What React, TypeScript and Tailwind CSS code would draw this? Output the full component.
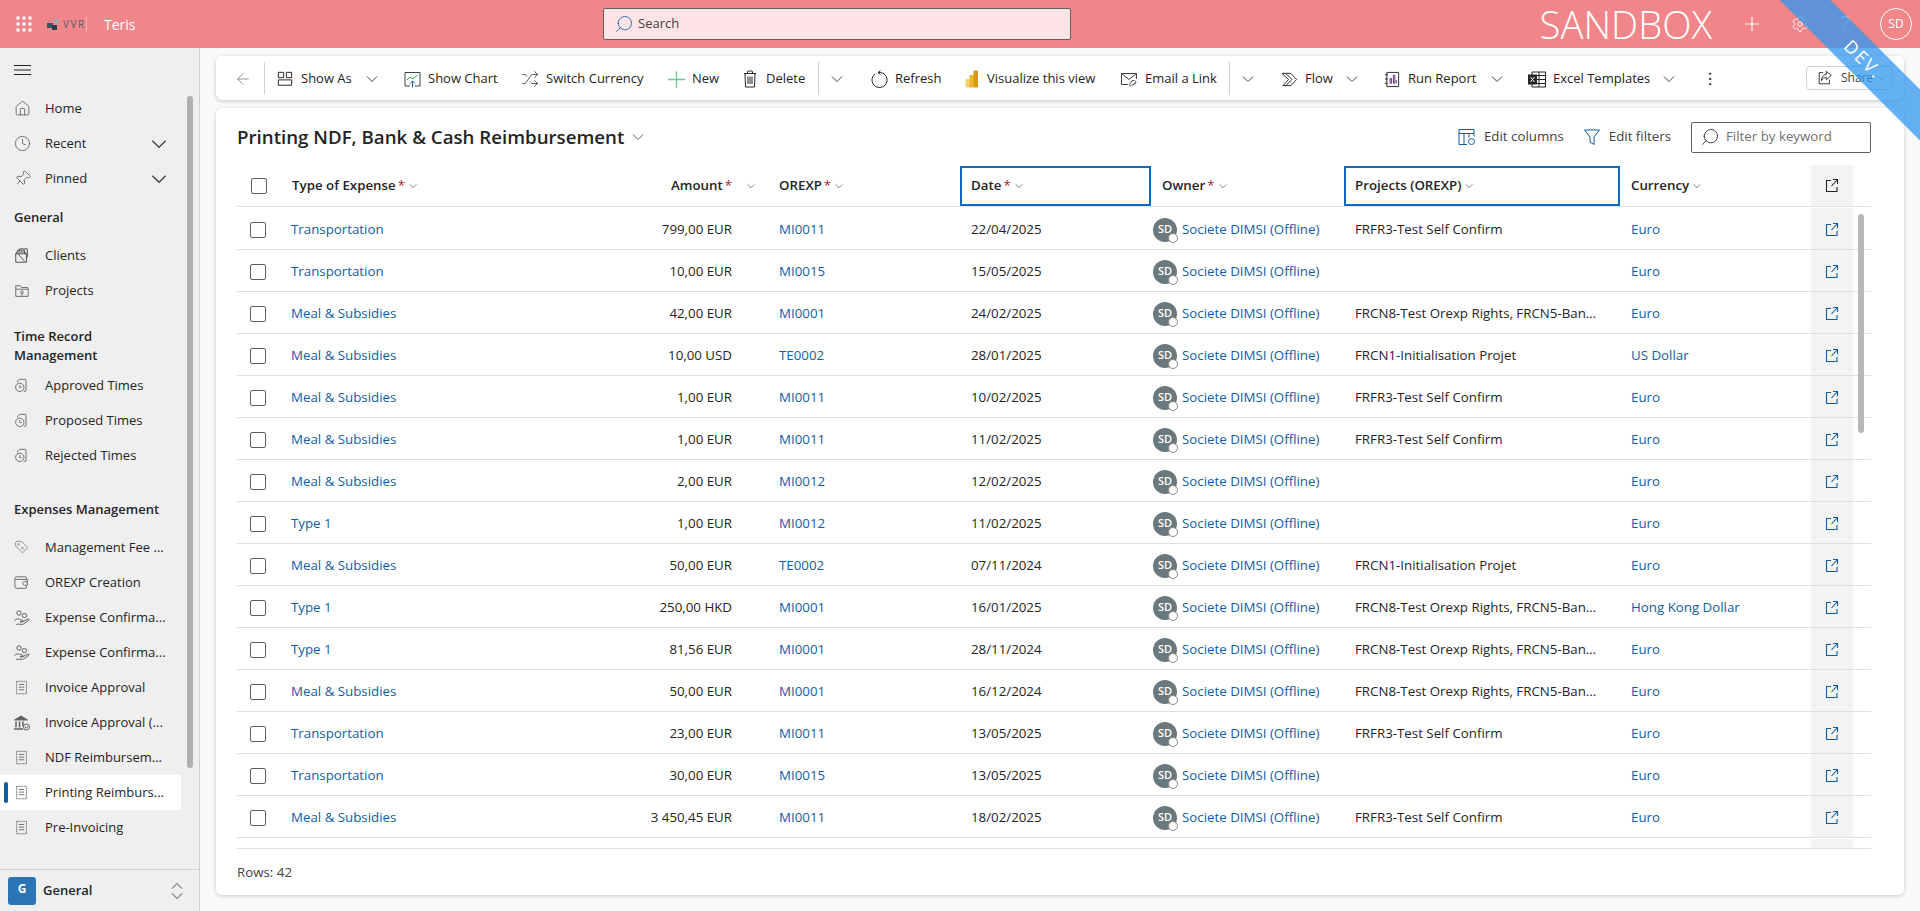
import React from "react";
import { ArrowLeft, Clock, EllipsisVertical, House, Pin, Plus, Search, Settings, Shuffle } from "lucide-react";

const Svg = ({ size = 18, children, className = "" }: { size?: number; children: React.ReactNode; className?: string }) => (
    <svg width={size} height={size} viewBox="0 0 18 18" fill="none" stroke="currentColor" strokeWidth="1" className={className}>
        {children}
    </svg>
);

const Chev = ({ size = 12, className = "text-[#424242]" }: { size?: number; className?: string }) => (
    <svg width={size} height={size} viewBox="0 0 12 12" fill="none" stroke="currentColor" strokeWidth="1" className={className}>
        <path d="M1 3.5 6 8.5 11 3.5" />
    </svg>
);

const OpenIcon = () => (
    <svg width="14" height="15" viewBox="0 0 14 15" fill="none" stroke="#115ea3" strokeWidth="1.1">
        <path d="M6 2.500H1.500v11h10.500V9" />
        <path d="M8 1.500h4.500V6M12.500 1.500l-6 6.500" />
    </svg>
);

const TimeDoc = () => (
    <Svg size={16} className="text-[#616161]">
        <path d="M4 5V3.500L6 1.500h6.500a1 1 0 0 1 1 1v11.500a1 1 0 0 1-1 1H11" />
        <circle cx="6.500" cy="10.500" r="4.700" />
        <path d="M6.500 8v2.800h2" />
    </Svg>
);

const Receipt = () => (
    <Svg size={16} className="text-[#616161]">
        <path strokeDasharray="1.5 .6" d="M3 1.500h11v14H3z" />
        <path d="M5.500 5h6M5.500 8h6M5.500 11h6" />
    </Svg>
);

const HandCoins = () => (
    <Svg size={18} className="text-[#616161]">
        <circle cx="6" cy="4" r="2.200" />
        <circle cx="11.500" cy="6.500" r="2.200" />
        <path d="M1.500 11.500c2-2 3.500-2 5-1l2.500 .5c1.500 .2 1.500 1.700 0 1.800l-2 .1 3-.3 5-2.600c1-.4 1.600 .6 .7 1.300l-5.200 3.700c-1 .5-3 .6-5.300 0l-2 .5" />
    </Svg>
);

const navTop = [
    { label: "Home", icon: <House size={17} strokeWidth={1} /> },
    { label: "Recent", icon: <Clock size={17} strokeWidth={1} />, chev: true },
    { label: "Pinned", icon: <Pin size={17} strokeWidth={1} className="rotate-45" />, chev: true },
];

const NavItem = ({ label, icon, chev, active }: { label: string; icon: React.ReactNode; chev?: boolean; active?: boolean }) => (
    <div className={`relative flex h-[35px] w-[181px] items-center ${active ? "bg-white" : ""}`}>
        {active && <div className="absolute left-[4px] top-[7px] h-[21px] w-[4px] rounded-sm bg-[#115ea3]" />}
        <div className="flex w-[45px] justify-center pr-[1px] text-[#424242]">{icon}</div>
        <span className="truncate pt-[1px]">{label}</span>
        {chev && (
            <div className="ml-auto mr-[14px]">
                <Chev size={16} />
            </div>
        )}
    </div>
);

const Sidebar = () => (
    <aside className="relative flex w-[200px] shrink-0 flex-col border-r border-[#d1d1d1] bg-[#efefef] text-[13px] text-[#242424]">
        <div className="flex h-[43px] items-center pl-[14px]">
            <svg width="17" height="10" viewBox="0 0 17 10" stroke="#242424" strokeWidth="1">
                <path d="M0 .5h17M0 5h17M0 9.500h17" />
            </svg>
        </div>
        {navTop.map((n) => (
            <NavItem key={n.label} {...n} />
        ))}
        <div className="flex h-[42px] items-center pl-[14px] pt-[2px] font-semibold">General</div>
        <NavItem
            label="Clients"
            icon={
                <Svg size={16} className="text-[#424242]">
                    <path d="M2 6.500h12v9.500H2zM2 6.500l1-2h8l3 2M4 4.500v-2h8v4M6 2.500v-1.500h9v9l-1 1M4.500 6.500 12 15" />
                </Svg>
            }
        />
        <NavItem
            label="Projects"
            icon={
                <Svg size={16} className="text-[#616161]">
                    <path d="M2 15V3h5l1.500 2H15a1 1 0 0 1 1 1v9zM2 7h14" />
                    <circle cx="9" cy="10.500" r="1.500" />
                    <path d="M9 12v3" />
                </Svg>
            }
        />
        <div className="pb-[3px] pl-[14px] pt-[19px] font-semibold leading-[19px]">
            Time Record
            <br />
            Management
        </div>
        <NavItem label="Approved Times" icon={<TimeDoc />} />
        <NavItem label="Proposed Times" icon={<TimeDoc />} />
        <NavItem label="Rejected Times" icon={<TimeDoc />} />
        <div className="pb-[11px] pl-[14px] pt-[27px] font-semibold leading-[19px]">Expenses Management</div>
        <NavItem
            label="Management Fee ..."
            icon={
                <Svg size={16} className="text-[#8a8a8a]">
                    <path d="M1.500 3.500 3 1.500h5.500l7 7-6 6-7.500-7.500z" />
                    <circle cx="5" cy="5" r="1" />
                    <path d="M8 7.500l3 3M11 7.500l-3 3" />
                </Svg>
            }
        />
        <NavItem
            label="OREXP Creation"
            icon={
                <Svg size={16} className="text-[#616161]">
                    <path d="M14 5V3a1 1 0 0 0-1-1H3a2 2 0 0 0-2 2v9a2 2 0 0 0 2 2h10a1 1 0 0 0 1-1v-2" />
                    <path d="M1.500 5H15v6.500h-3a2 2 0 0 1 0-4h3" />
                </Svg>
            }
        />
        <NavItem label="Expense Confirma..." icon={<HandCoins />} />
        <NavItem label="Expense Confirma..." icon={<HandCoins />} />
        <NavItem label="Invoice Approval" icon={<Receipt />} />
        <NavItem
            label="Invoice Approval (..."
            icon={
                <Svg size={18} className="text-[#616161]">
                    <path d="M1.500 6 8 2l6.500 4z" fill="currentColor" />
                    <path d="M3 7.500v6M6.500 7.500v6M10 7.500v5M1 15h9" strokeWidth="1.500" />
                    <circle cx="13.500" cy="13" r="3" fill="#efefef" />
                    <path d="m12 13 1.200 1.200 2-2.200" />
                </Svg>
            }
        />
        <NavItem label="NDF Reimbursem..." icon={<Receipt />} />
        <NavItem label="Printing Reimburs..." icon={<Receipt />} active />
        <NavItem label="Pre-Invoicing" icon={<Receipt />} />
        <div className="flex-1" />
        <div className="flex h-[42px] items-center border-t border-[#d1d1d1] pl-[8px]">
            <div className="flex h-[28px] w-[28px] items-center justify-center rounded-[3px] bg-[#2a75b5] pb-[4px] text-[12px] font-bold text-white">G</div>
            <span className="ml-[7px] font-semibold">General</span>
            <svg width="12" height="18" viewBox="0 0 12 18" fill="none" stroke="#424242" strokeWidth="1" className="ml-auto mr-[16px]">
                <path d="M1 6.500 6 1.500l5 5M1 11.500l5 5 5-5" />
            </svg>
        </div>
        <div className="absolute left-[187px] top-[48px] h-[672px] w-[6px] rounded-[3px] bg-[#b0b0b0]" />
    </aside>
);

const Tool = ({ w, icon, label, chev }: { w: string; icon: React.ReactNode; label: string; chev?: boolean }) => (
    <div className={`flex shrink-0 items-center ${w}`}>
        <div className="flex w-[24px] justify-center">{icon}</div>
        <span className="ml-[4px] whitespace-nowrap">{label}</span>
        {chev && (
            <div className="ml-auto mr-[22px]">
                <Chev />
            </div>
        )}
    </div>
);

const Sep = () => <div className="-mt-[2px] h-[32px] w-px shrink-0 bg-[#d1d1d1]" />;

const Toolbar = () => (
    <div className="flex h-[44px] shrink-0 items-center rounded-md bg-white pt-[2px] text-[13px] text-[#242424] shadow-[0_1px_4px_rgba(0,0,0,0.22)]">
        <div className="flex w-[48px] justify-center pl-[6px] text-[#707070]">
            <ArrowLeft size={18} strokeWidth={1} />
        </div>
        <Sep />
        <div className="w-[8px]" />
        <Tool
            w="w-[127px]"
            label="Show As"
            chev
            icon={
                <Svg size={16} className="text-[#111]">
                    <path d="M1.500 1.500h6v6h-6zM10.500 1.500h6v6h-6zM1.500 10h15v6h-15z" />
                </Svg>
            }
        />
        <Tool
            w="w-[118px]"
            label="Show Chart"
            icon={
                <svg width="17" height="17" viewBox="0 0 17 17" fill="none" strokeWidth="1">
                    <path d="M6 15H1V1.500h15V15h-5" stroke="#424242" />
                    <path d="m3 9 3-3 3 2 4.500-4" stroke="#2fa84f" />
                    <path d="M8.500 16.500V10M6 12.500 8.500 10l2.500 2.500" stroke="#115ea3" />
                </svg>
            }
        />
        <Tool w="w-[146px]" label="Switch Currency" icon={<Shuffle size={18} strokeWidth={1} />} />
        <Tool
            w="w-[74px]"
            label="New"
            icon={
                <svg width="17" height="17" viewBox="0 0 17 17" stroke="#73c796" strokeWidth="1.300">
                    <path d="M8.500 0v17M0 8.500h17" />
                </svg>
            }
        />
        <Tool
            w="w-[80px]"
            label="Delete"
            icon={
                <Svg size={18} className="text-[#242424]">
                    <path d="M3 3.500h12M6.500 3.500V2a1 1 0 0 1 1-1h3a1 1 0 0 1 1 1v1.500M4 3.500l.5 13.500h9l.5-13.500M7 6.500v7.500M9 6.500v7.500M11 6.500v7.500" />
                </Svg>
            }
        />
        <Sep />
        <div className="flex w-[48px] shrink-0 pl-[12px]">
            <Chev />
        </div>
        <Tool
            w="w-[92px]"
            label="Refresh"
            icon={
                <Svg size={18} className="text-[#242424]">
                    <path d="M5 4A7.500 7.500 0 1 0 9 2.500" />
                    <path d="M10.500 .5 8 2.500l2.500 2" />
                </Svg>
            }
        />
        <Tool
            w="w-[158px]"
            label="Visualize this view"
            icon={
                <svg width="13" height="18" viewBox="0 0 13 18">
                    <rect x="0.500" y="9" width="4.500" height="8.500" rx="1" fill="#f6d36a" />
                    <rect x="4.500" y="5" width="4.500" height="12.500" rx="1" fill="#eeb52f" />
                    <rect x="8.500" y="0.500" width="4.500" height="17" rx="1" fill="#d49a14" />
                </svg>
            }
        />
        <Tool
            w="w-[112px]"
            label="Email a Link"
            icon={
                <Svg size={18} className="text-[#424242]">
                    <path d="M8 14.500H1.500v-11h15V9M1.500 3.500 9 9.500l7.500-6" />
                    <path d="M11 12.500a2 2 0 0 1 2-2h1M14.500 13a2 2 0 0 1-2 2h-1M10.500 16.500a2.500 2.500 0 0 1 .5-4M15 10.500a2.500 2.500 0 0 1-.5 4" />
                </Svg>
            }
        />
        <Sep />
        <div className="flex w-[47px] shrink-0 pl-[12px]">
            <Chev />
        </div>
        <Tool
            w="w-[103px]"
            label="Flow"
            chev
            icon={
                <Svg size={17} className="text-[#242424]">
                    <path d="M1 2.500h9.500L16.500 9l-6 6.500H2L8 9z" />
                    <path d="m5 2.500 6.500 6.500-6.500 6.500" />
                </Svg>
            }
        />
        <Tool
            w="w-[145px]"
            label="Run Report"
            chev
            icon={
                <svg width="17" height="17" viewBox="0 0 18 18" fill="none" strokeWidth="1">
                    <path d="M3 1.500h12.500v15H3zM1 4h3M1 8.500h3M1 13h3" stroke="#242424" />
                    <path d="M6.500 8v5H8V8zM10 4.500V13h1.500V4.500zM13 9.500V13" stroke="#5a2d82" />
                </svg>
            }
        />
        <Tool
            w="w-[172px]"
            label="Excel Templates"
            chev
            icon={
                <svg width="18" height="17" viewBox="0 0 18 17" fill="none" stroke="#242424" strokeWidth="1">
                    <path d="M4 1h13.500v15H4zM4 4.500h13.500M4 8.500h13.500M4 12.500h13.500M11 1v15" />
                    <rect x="0.500" y="4" width="8" height="9" fill="#242424" />
                    <path d="m2.500 6 4 5M6.500 6l-4 5" stroke="#fff" />
                </svg>
            }
        />
        <div className="flex w-[26px] justify-center">
            <EllipsisVertical size={18} strokeWidth={1.200} />
        </div>
        <div className="-mt-[2px] ml-auto mr-[11px] flex h-[24px] w-[87px] items-center rounded border border-[#d1d1d1] pl-[10px] text-[12px]">
            <Svg size={16} className="text-[#242424]">
                <path d="M7 3H2.500v12.500H14V11" />
                <path d="M10.500 1.500 16 6l-5.500 5V8.500C8 8.500 6 9.500 5 12c0-4 2-6.500 5.500-7z" />
            </Svg>
            <span className="ml-[8px] text-[#424242]">Share</span>
            <Chev size={8} className="ml-[5px] text-[#616161]" />
        </div>
    </div>
);

const HCell = ({ label, req, box, right }: { label: string; req?: boolean; box?: boolean; right?: boolean }) => (
    <div
        className={`flex h-[40px] items-center font-semibold ${box ? "border-2 border-[#0f6cbd] pl-[9px]" : "pl-[11px]"} ${
            right ? "justify-end pr-[13px]" : ""
        }`}
    >
        <span>{label}</span>
        {req && <span className="ml-[2px] font-normal text-[#a4262c]">*</span>}
        <Chev size={8} className={`${right ? "ml-[15px]" : "ml-[4px]"} text-[#424242]`} />
    </div>
);

const gridCols = "grid grid-cols-[44px_347px_140px_192px_191px_193px_276px_191px_42px]";

const Box = () => <div className="h-[16px] w-[16px] rounded-[2px] border border-[#616161]" />;

const link = "text-[#115ea3]";

const FRFR3 = "FRFR3-Test Self Confirm";
const FRCN8 = "FRCN8-Test Orexp Rights, FRCN5-Ban...";
const FRCN1 = "FRCN1-Initialisation Projet";
const rows = [
    ["Transportation", "799,00 EUR", "MI0011", "22/04/2025", FRFR3, "Euro"],
    ["Transportation", "10,00 EUR", "MI0015", "15/05/2025", "", "Euro"],
    ["Meal & Subsidies", "42,00 EUR", "MI0001", "24/02/2025", FRCN8, "Euro"],
    ["Meal & Subsidies", "10,00 USD", "TE0002", "28/01/2025", FRCN1, "US Dollar"],
    ["Meal & Subsidies", "1,00 EUR", "MI0011", "10/02/2025", FRFR3, "Euro"],
    ["Meal & Subsidies", "1,00 EUR", "MI0011", "11/02/2025", FRFR3, "Euro"],
    ["Meal & Subsidies", "2,00 EUR", "MI0012", "12/02/2025", "", "Euro"],
    ["Type 1", "1,00 EUR", "MI0012", "11/02/2025", "", "Euro"],
    ["Meal & Subsidies", "50,00 EUR", "TE0002", "07/11/2024", FRCN1, "Euro"],
    ["Type 1", "250,00 HKD", "MI0001", "16/01/2025", FRCN8, "Hong Kong Dollar"],
    ["Type 1", "81,56 EUR", "MI0001", "28/11/2024", FRCN8, "Euro"],
    ["Meal & Subsidies", "50,00 EUR", "MI0001", "16/12/2024", FRCN8, "Euro"],
    ["Transportation", "23,00 EUR", "MI0011", "13/05/2025", FRFR3, "Euro"],
    ["Transportation", "30,00 EUR", "MI0015", "13/05/2025", "", "Euro"],
    ["Meal & Subsidies", "3 450,45 EUR", "MI0011", "18/02/2025", FRFR3, "Euro"],
];

const Owner = () => (
    <div className="flex items-center pl-[2px] pt-[2px]">
        <div className="relative flex h-[24px] w-[24px] shrink-0 items-center justify-center rounded-full bg-[#69797e] text-[11px] font-semibold text-white">
            SD
            <div className="absolute bottom-[-1px] right-[-1px] h-[10px] w-[10px] rounded-full border border-[#8a8a8a] bg-white" />
        </div>
        <span className={`ml-[5px] whitespace-nowrap ${link}`}>Societe DIMSI (Offline)</span>
    </div>
);

const Table = () => (
    <div className="relative mr-[33px] flex min-h-0 flex-1 flex-col border-b border-[#e0e0e0]">
        <div className={`${gridCols} h-[42px] shrink-0 border-b border-[#e0e0e0] py-px`}>
            <div className="flex h-[40px] items-center pl-[14px]">
                <Box />
            </div>
            <HCell label="Type of Expense" req />
            <HCell label="Amount" req right />
            <HCell label="OREXP" req />
            <HCell label="Date" req box />
            <HCell label="Owner" req />
            <HCell label="Projects (OREXP)" box />
            <HCell label="Currency" />
            <div className="-mt-px flex h-[41px] items-center justify-center bg-[#f3f3f3]">
                <svg width="14" height="15" viewBox="0 0 14 15" fill="none" stroke="#242424" strokeWidth="1.100">
                    <path d="M6 2.500H1.500v11h10.500V9" />
                    <path d="M8 1.500h4.500V6M12.500 1.500l-6 6.500" />
                </svg>
            </div>
        </div>
        <div className="min-h-0 flex-1 overflow-hidden pt-px">
            {rows.map((r, i) => (
                <div key={i} className={`${gridCols} h-[42px] items-center border-b border-[#e0e0e0]`}>
                    <div className="pl-[13px] pt-[2px]">
                        <Box />
                    </div>
                    <div className={`pl-[10px] pt-[2px] ${link}`}>{r[0]}</div>
                    <div className="pr-[36px] pt-[2px] text-right">{r[1]}</div>
                    <div className={`pl-[11px] pt-[2px] ${link}`}>{r[2]}</div>
                    <div className="pl-[11px] pt-[2px]">{r[3]}</div>
                    <Owner />
                    <div className="whitespace-nowrap pl-[11px] pt-[2px]">{r[4]}</div>
                    <div className={`pl-[11px] pt-[2px] ${link}`}>{r[5]}</div>
                    <div className="flex h-[41px] items-center justify-center bg-[#f3f3f3] pt-[2px]">
                        <OpenIcon />
                    </div>
                </div>
            ))}
            <div className={`${gridCols} h-[42px] items-center`}>
                <div className="col-start-6 pl-[2px] pt-[2px]">
                    <div className="h-[24px] w-[24px] rounded-full bg-[#69797e]" />
                </div>
                <div className="col-start-9 h-[41px] bg-[#f3f3f3]" />
            </div>
        </div>
        <div className="absolute left-[1621px] top-[49px] h-[219px] w-[6px] rounded-[3px] bg-[#b8b8b8]" />
    </div>
);

const Card = () => (
    <div className="mt-[8px] flex min-h-0 flex-1 flex-col rounded-md bg-white pl-[21px] text-[13.3px] text-[#242424] shadow-[0_1px_4px_rgba(0,0,0,0.2)]">
        <div className="flex h-[57px] shrink-0 items-center pr-[33px] pt-[1px]">
            <h1 className="text-[18.7px] font-semibold">Printing NDF, Bank &amp; Cash Reimbursement</h1>
            <Chev size={12} className="ml-[8px] text-[#616161]" />
            <div className="ml-auto flex items-center">
                <svg width="18" height="18" viewBox="0 0 18 18" fill="none" stroke="#115ea3" strokeWidth="1">
                    <path d="M1 1.500h15v4H1zM1 5.500v11h8M6 5.500v11M11 5.500v4M16 5.500v3" />
                    <circle cx="13.500" cy="13.500" r="3" />
                </svg>
                <span className="ml-[8px] text-[#424242]">Edit columns</span>
                <svg width="18" height="18" viewBox="0 0 18 18" fill="none" stroke="#115ea3" strokeWidth="1" className="ml-[19px]">
                    <path d="M1.500 2h15l-5.500 7v7.500l-4-2.500V9z" />
                </svg>
                <span className="ml-[8px] text-[#424242]">Edit filters</span>
                <div className="ml-[20px] flex h-[31px] w-[180px] items-center rounded-[2px] border border-[#616161] pl-[8px] text-[#707070]">
                    <Search size={20} strokeWidth={1} className="-scale-x-100 text-[#242424]" />
                    <span className="ml-[6px]">Filter by keyword</span>
                </div>
            </div>
        </div>
        <Table />
        <div className="flex h-[46px] shrink-0 items-center pt-[2px] text-[#424242]">Rows: 42</div>
    </div>
);

const Header = () => (
    <header className="flex h-[48px] shrink-0 items-center bg-[#f0868a] text-white">
        <svg width="16" height="16" viewBox="0 0 16 16" fill="#fff" className="ml-[16px]">
            {[1, 7, 13].map((y) => [1, 7, 13].map((x) => <rect key={`${x}-${y}`} x={x - 0.5} y={y - 0.5} width="3" height="3" />))}
        </svg>
        <div className="ml-[15px] flex w-[40px] items-center">
            <svg width="14" height="12" viewBox="0 0 14 12">
                <rect x="0" y="5" width="6" height="5" fill="#37566a" />
                <rect x="5" y="7" width="5" height="5" fill="#2b3f50" />
                <rect x="7" y="1" width="5" height="5" fill="#a7a7ad" />
            </svg>
            <span className="ml-[2px] whitespace-nowrap border-r border-[#f6b0b3] py-[2px] text-[10px] leading-[14px] tracking-[1.5px] text-[#5a5a6e]">VVR</span>
        </div>
        <span className="ml-[17px] text-[14px]">Teris</span>
        <div className="absolute left-[603px] top-[8px] flex h-[32px] w-[468px] items-center rounded-[2px] border border-[#616161] bg-[#fce4e6] pl-[10px] text-[13px] text-[#424242]">
            <Search size={20} strokeWidth={1} className="-scale-x-100 text-[#115ea3]" />
            <span className="ml-[4px]">Search</span>
        </div>
        <span className="ml-auto text-[38.3px] font-light leading-none">SANDBOX</span>
        <Plus size={22} strokeWidth={1.200} className="ml-[29px]" />
        <Settings size={18} strokeWidth={1.200} className="ml-[28px]" />
        <span className="ml-[32px] w-[12px] text-[20px] font-light">?</span>
        <div className="ml-[27px] mr-[8px] flex h-[32px] w-[32px] items-center justify-center rounded-full border border-white text-[12px]">SD</div>
    </header>
);

const Ribbon = () => (
    <div className="pointer-events-none absolute right-0 top-0 h-[200px] w-[200px] overflow-hidden">
        <div className="absolute left-[-11px] top-[36px] flex h-[36px] w-[300px] rotate-45 items-center justify-center bg-[rgba(50,151,239,0.76)] pl-[14px] text-[18px] tracking-[2px] text-white">
            DEV.
        </div>
    </div>
);

export default function App() {
    return (
        <div className="relative flex h-[911px] w-[1920px] flex-col overflow-hidden bg-[#fafafa] font-['Open_Sans',sans-serif]">
            <Header />
            <div className="flex min-h-0 flex-1">
                <Sidebar />
                <main className="flex min-w-0 flex-1 flex-col pb-[16px] pl-[16px] pr-[16px] pt-[8px]">
                    <Toolbar />
                    <Card />
                </main>
            </div>
            <Ribbon />
        </div>
    );
}
